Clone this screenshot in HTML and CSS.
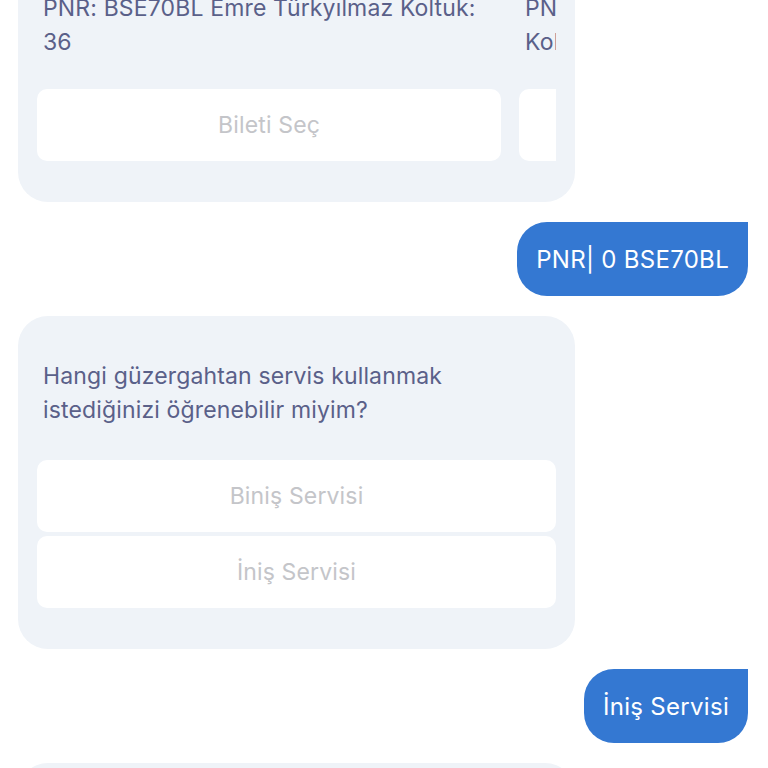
FILE: index.html
```html
<!DOCTYPE html>
<html lang="tr">
<head>
<meta charset="utf-8">
<link rel="stylesheet" href="styles.css">
</head>
<body>
<div class="chat">
  <div class="bot card-first">
    <div class="carousel">
      <div class="slide">
        <p class="msg">PNR: BSE70BL Emre Türkyılmaz Koltuk: 36</p>
        <div class="opt">Bileti Seç</div>
      </div>
      <div class="slide">
        <p class="msg">PNR: BSE70BL Zeynep Türkyılmaz Koltuk: 37</p>
        <div class="opt">Bileti Seç</div>
      </div>
    </div>
  </div>
  <div class="user">PNR| 0 BSE70BL</div>
  <div class="bot">
    <p class="msg">Hangi güzergahtan servis kullanmak istediğinizi öğrenebilir miyim?</p>
    <div class="opts">
      <div class="opt">Biniş Servisi</div>
      <div class="opt">İniş Servisi</div>
    </div>
  </div>
  <div class="user">İniş Servisi</div>
  <div class="bot">
    <p class="msg">Teşekkürler.</p>
  </div>
</div>
</body>
</html>
```

FILE: styles.css
```css
html, body {
  margin: 0;
  padding: 0;
  background: #ffffff;
  overflow: hidden;
  height: 768px;
}
.chat {
  display: flex;
  flex-direction: column;
  align-items: flex-start;
  gap: 20px;
  padding: 0 20px 0 18px;
  margin-top: -52px;
  font-family: Inter, "Open Sans", sans-serif;
  font-size: 23px;
  font-weight: 400;
  letter-spacing: 0.15px;
}
.bot {
  box-sizing: border-box;
  width: 557px;
  background: #eff3f8;
  border-radius: 30px;
  padding: 43px 19px 41px 19px;
}
.msg {
  margin: 0;
  padding: 0 6px;
  color: #5a6089;
  line-height: 34px;
}
.carousel {
  display: flex;
  gap: 18px;
  overflow: hidden;
}
.slide {
  flex: 0 0 464px;
  display: flex;
  flex-direction: column;
  gap: 30px;
}
.opts {
  margin-top: 33px;
  display: flex;
  flex-direction: column;
  gap: 4px;
}
.opt {
  height: 72px;
  background: #ffffff;
  border-radius: 10px;
  display: flex;
  align-items: center;
  justify-content: center;
  color: #c4c5c9;
}
.user {
  align-self: flex-end;
  box-sizing: border-box;
  height: 74px;
  padding: 0 19px;
  display: flex;
  align-items: center;
  background: #3478d2;
  color: #ffffff;
  font-size: 24px;
  letter-spacing: 0.3px;
  border-radius: 30px 0 30px 30px;
}
```
